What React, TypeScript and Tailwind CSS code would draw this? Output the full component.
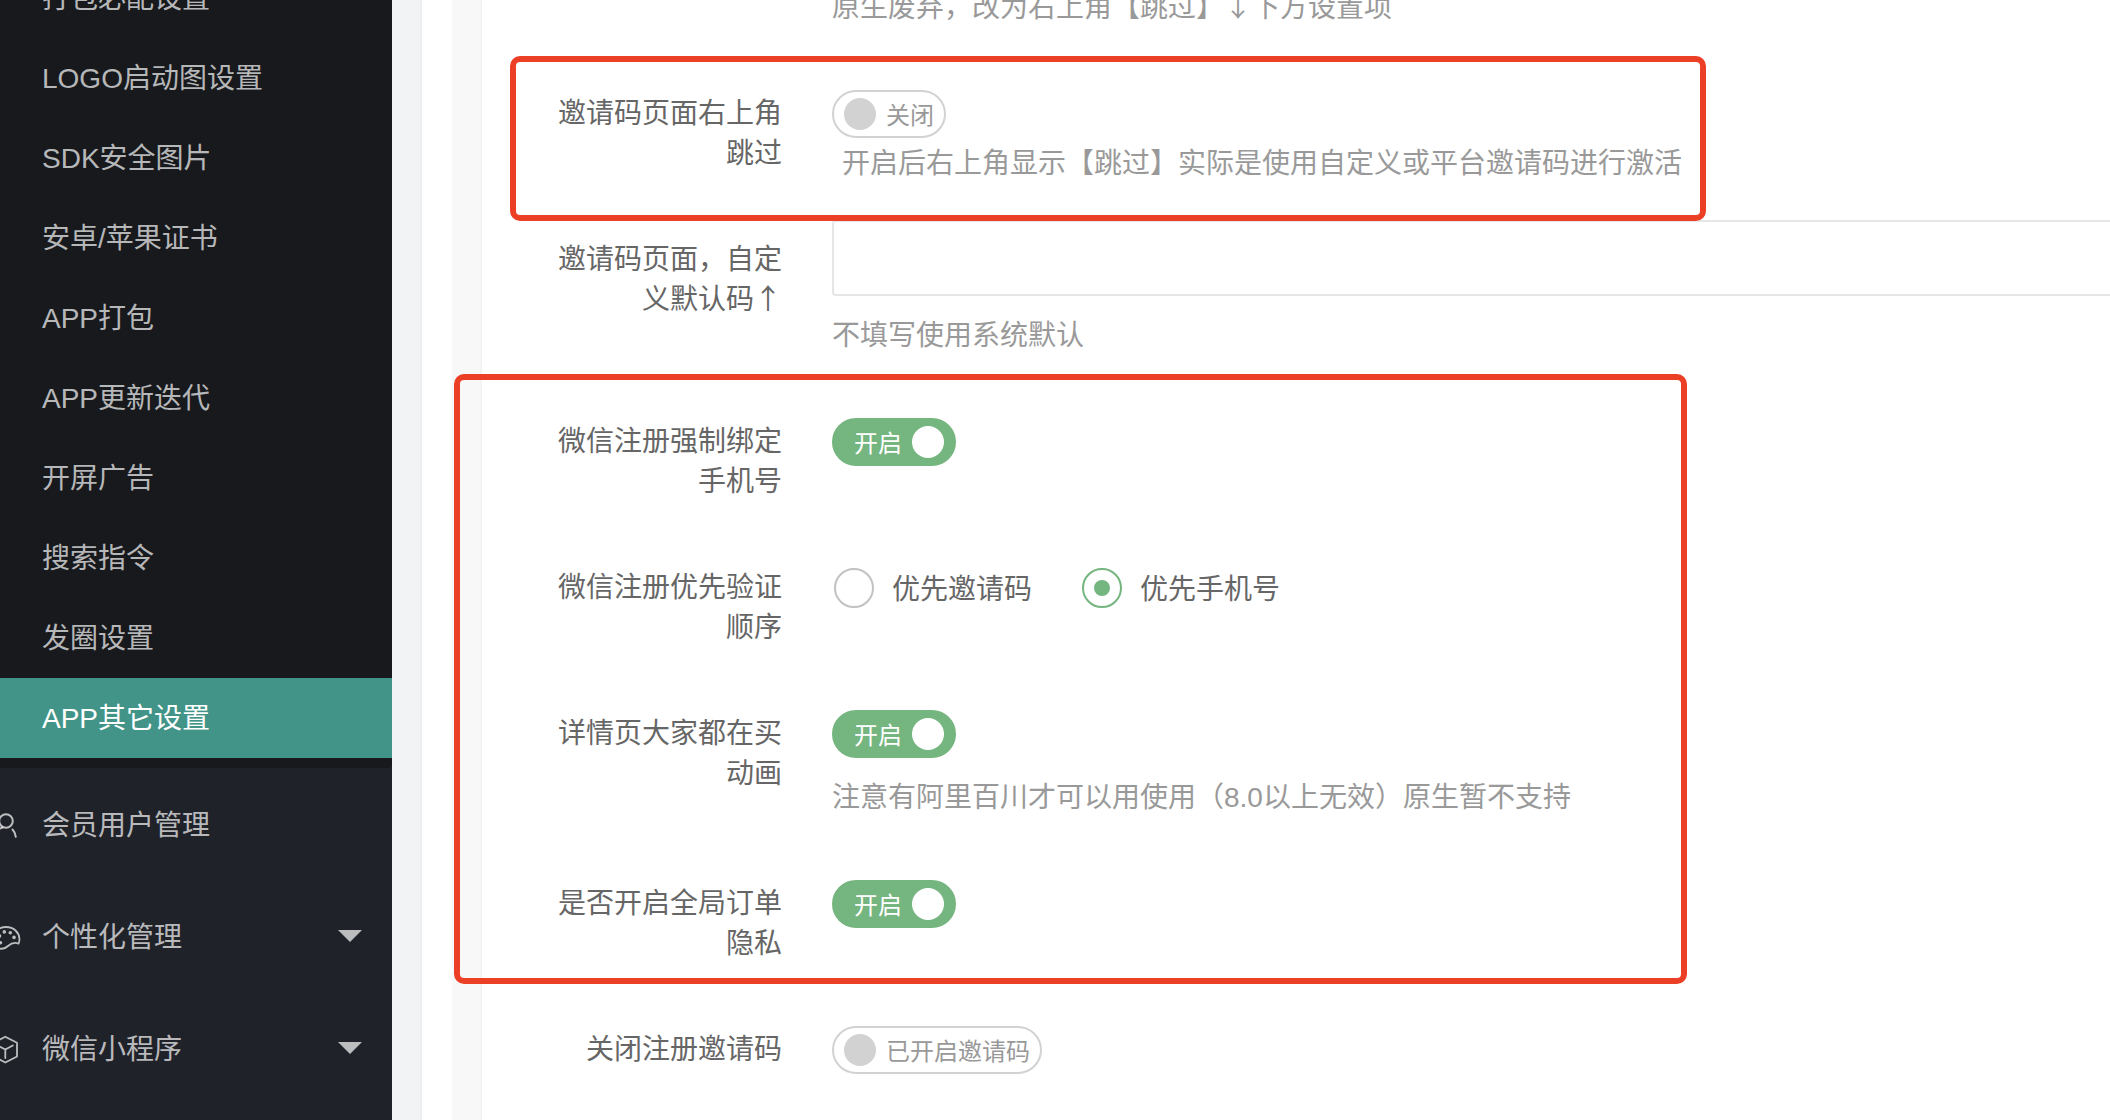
import React, { useState } from 'react';

const subItems = [
  '打包必配设置',
  'LOGO启动图设置',
  'SDK安全图片',
  '安卓/苹果证书',
  'APP打包',
  'APP更新迭代',
  '开屏广告',
  '搜索指令',
  '发圈设置',
  'APP其它设置',
];

function UserIcon() {
  return (
    <svg width="32" height="32" viewBox="0 0 32 32" fill="none" stroke="currentColor" strokeWidth="2" strokeLinecap="round">
      <circle cx="16" cy="13" r="6.8" />
      <path d="M12.5 19.5C8 21 5.5 24.500 5 29.500" />
      <path d="M22.500 21.500C24.500 23.500 25.500 26 25.800 28.800" />
    </svg>
  );
}

function PaletteIcon() {
  return (
    <svg width="32" height="32" viewBox="0 0 32 32" fill="none" stroke="currentColor" strokeWidth="1.8" strokeLinejoin="round">
      <path d="M16 7C24 7 29 12.500 29.400 18.500C29.500 21 29.200 22.800 28.500 23.600C24.500 22 20.500 23.800 18 26C15.500 28.500 12 29.500 8 28C4 26 2 22 2.500 17.500C3.200 11.500 9 7 16 7Z" />
      <g fill="currentColor" stroke="none">
        <circle cx="14.300" cy="11.900" r="1.800" />
        <circle cx="20.300" cy="12.700" r="1.800" />
        <circle cx="24" cy="17.400" r="1.800" />
        <circle cx="9.500" cy="16" r="1.800" />
        <circle cx="10.500" cy="22.700" r="1.800" />
      </g>
    </svg>
  );
}

function CubeIcon() {
  return (
    <svg width="32" height="32" viewBox="0 0 32 32" fill="none" stroke="currentColor" strokeWidth="1.800" strokeLinejoin="round" strokeLinecap="round">
      <path d="M15.300 4.700L27 10.700V24.500L15.300 30.500L3.600 24.500V10.700Z" />
      <path d="M7.800 13.500L15.300 17.500L22.800 13.500M15.300 17.500V26" />
    </svg>
  );
}

const menus = [
  { name: '会员用户管理', icon: <UserIcon />, more: false },
  { name: '个性化管理', icon: <PaletteIcon />, more: true },
  { name: '微信小程序', icon: <CubeIcon />, more: true },
];

function Sidebar() {
  return (
    <aside className="-ml-12 w-[440px] shrink-0 bg-[#20222a] text-white/70">
      <nav>
        <ul className="-mt-[42px] rounded-br bg-[#17191d] pb-[10px]">
          {subItems.map((item) => (
            <li key={item}>
              <a
                href="#"
                className={`block h-20 pl-[90px] leading-[82px] ${
                  item === 'APP其它设置' ? 'bg-[#429488] text-white' : ''
                }`}
              >
                {item}
              </a>
            </li>
          ))}
        </ul>
        <ul>
          {menus.map((menu) => (
            <li key={menu.name}>
              <a href="#" className="flex h-28 items-center pr-[30px] pl-[38px]">
                {menu.icon}
                <span className="ml-5 pt-1">{menu.name}</span>
                {menu.more && (
                  <svg className="ml-auto" width="24" height="12" viewBox="0 0 24 12" fill="currentColor">
                    <path d="M0 0H24L12 12Z" />
                  </svg>
                )}
              </a>
            </li>
          ))}
        </ul>
      </nav>
    </aside>
  );
}

// Arrows take a full character cell, so they come from the CJK font
function Arrow({ children }: { children: string }) {
  return <span className="font-['Noto_Sans_CJK_SC',sans-serif] leading-none">{children}</span>;
}

function Hint({ children, className = 'pt-5 pb-4' }: { children: React.ReactNode; className?: string }) {
  return <p className={`whitespace-nowrap text-[#999] ${className}`}>{children}</p>;
}

interface SwitchProps {
  id: string;
  on?: boolean;
  onText?: string;
  offText?: string;
}

function Switch({ id, on = false, onText = '开启', offText = '关闭' }: SwitchProps) {
  const [checked, setChecked] = useState(on);

  return (
    <label
      className={`relative mt-4 flex h-12 w-fit cursor-pointer items-center gap-[10px] rounded-full border-2 px-[10px] text-2xl ${
        checked ? 'flex-row-reverse border-[#75b57f] bg-[#75b57f] pl-5 text-white' : 'border-[#d2d2d2] bg-white text-[#999]'
      }`}
    >
      <input
        id={id}
        type="checkbox"
        className="sr-only"
        checked={checked}
        onChange={(e) => setChecked(e.target.checked)}
      />
      <span className={`h-8 w-8 rounded-full ${checked ? 'bg-white' : 'bg-[#d2d2d2]'}`} />
      <span className="pt-1">{checked ? onText : offText}</span>
    </label>
  );
}

interface RowProps {
  id: string;
  label: React.ReactNode;
  children: React.ReactNode;
}

function Row({ id, label, children }: RowProps) {
  return (
    <div className="mb-[30px] flex">
      <label htmlFor={id} className="mr-[50px] w-[300px] shrink-0 pt-5 pb-4 pl-[60px] text-right text-[#666]">
        {label}
      </label>
      <div className="min-w-0 flex-1">{children}</div>
    </div>
  );
}

function OrderRadios() {
  const [order, setOrder] = useState('phone');
  const options = [
    { value: 'code', text: '优先邀请码' },
    { value: 'phone', text: '优先手机号' },
  ];

  return (
    <div className="flex gap-[50px] pt-[18px] pl-[2px] text-[#666]">
      {options.map((option) => (
        <label key={option.value} className="flex cursor-pointer items-center gap-[18px]">
          <input
            id={`order-${option.value}`}
            type="radio"
            name="order"
            value={option.value}
            checked={order === option.value}
            onChange={() => setOrder(option.value)}
            className="flex h-10 w-10 appearance-none items-center justify-center rounded-full border-2 border-[#c2c2c2] checked:border-[#75b57f] checked:before:h-4 checked:before:w-4 checked:before:rounded-full checked:before:bg-[#75b57f] checked:before:content-['']"
          />
          <span className="pt-1">{option.text}</span>
        </label>
      ))}
    </div>
  );
}

export default function App() {
  return (
    <div className="flex h-screen overflow-hidden bg-[#f2f3f5] font-['Liberation_Sans','Noto_Sans_CJK_SC',sans-serif] text-[28px] leading-10">
      <Sidebar />
      <main className="flex min-w-0 flex-1 pl-[30px]">
        <div className="flex min-w-0 flex-1 bg-white pl-[30px] shadow-[0_0_3px_rgba(0,0,0,0.08)]">
          <div className="flex min-w-0 flex-1 bg-[#f8f8f8] pl-[30px]">
            <form className="min-w-0 flex-1 bg-white shadow-[0_0_3px_rgba(0,0,0,0.08)]">
              <Hint className="-mt-3 mb-[30px] pb-4 pl-[350px]">
                原生废弃，改为右上角【跳过】<Arrow>↓</Arrow>下方设置项
              </Hint>

              <div className="relative">
                <Row id="skip" label="邀请码页面右上角跳过">
                  <Switch id="skip" />
                  <Hint className="pt-[6px] pl-[10px]">开启后右上角显示【跳过】实际是使用自定义或平台邀请码进行激活</Hint>
                </Row>
                <div className="pointer-events-none absolute -top-[18px] -bottom-[31px] left-[28px] z-10 w-[1196px] rounded-[10px] border-6 border-[#eb4025]" />
              </div>

              <Row id="code" label={<>邀请码页面，自定义默认码<Arrow>↑</Arrow></>}>
                <div className="-mr-8">
                  <input id="code" type="text" className="block h-[76px] w-full rounded-sm border-2 border-[#e6e6e6] bg-white px-5 outline-none" />
                </div>
                <Hint>不填写使用系统默认</Hint>
              </Row>

              <div className="relative">
                <Row id="bind" label="微信注册强制绑定手机号">
                  <Switch id="bind" on />
                </Row>
                <Row id="order-phone" label="微信注册优先验证顺序">
                  <OrderRadios />
                </Row>
                <Row id="buying" label="详情页大家都在买动画">
                  <Switch id="buying" on />
                  <Hint>注意有阿里百川才可以用使用（8.0以上无效）原生暂不支持</Hint>
                </Row>
                <Row id="privacy" label="是否开启全局订单隐私">
                  <Switch id="privacy" on />
                </Row>
                <div className="pointer-events-none absolute -top-[28px] bottom-[-4px] -left-[28px] z-10 w-[1233px] rounded-[10px] border-6 border-[#eb4025]" />
              </div>

              <Row id="close-code" label="关闭注册邀请码">
                <Switch id="close-code" onText="已关闭邀请码" offText="已开启邀请码" />
              </Row>
            </form>
          </div>
        </div>
      </main>
    </div>
  );
}
